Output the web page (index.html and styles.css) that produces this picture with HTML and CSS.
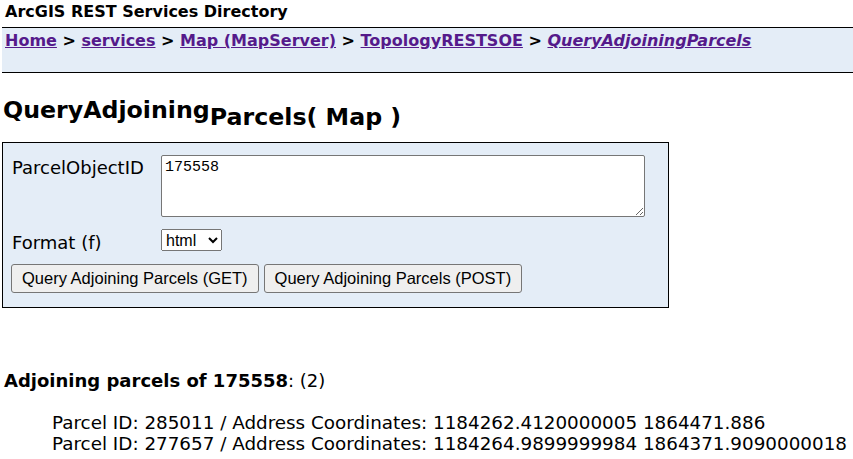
FILE: index.html
```html
<!DOCTYPE html>
<html>
<head>
<meta charset="utf-8">
<title>QueryAdjoiningParcels (Map)</title>
<link rel="stylesheet" href="styles.css">
</head>
<body>
<div class="site-title">ArcGIS REST Services Directory</div>
<nav class="crumbs">
  <a href="#">Home</a> &gt; <a href="#">services</a> &gt; <a href="#">Map (MapServer)</a> &gt; <a href="#">TopologyRESTSOE</a> &gt; <a href="#"><i>QueryAdjoiningParcels</i></a>
</nav>
<h2 class="op-title"><span class="op-raised">QueryAdjoining</span>Parcels( Map )</h2>
<form class="op-form">
  <div class="op-grid">
    <label class="op-label" for="pid">ParcelObjectID</label>
    <textarea id="pid" class="op-text">175558</textarea>
    <label class="op-label op-label-f" for="fmt">Format (f)</label>
    <select id="fmt" class="op-select"><option>html</option></select>
  </div>
  <div class="op-buttons">
    <button type="button" class="op-btn">Query Adjoining Parcels (GET)</button>
    <button type="button" class="op-btn">Query Adjoining Parcels (POST)</button>
  </div>
</form>
<div class="result-head"><b>Adjoining parcels of 175558</b>: (2)</div>
<div class="result-list">
  <div>Parcel ID: 285011 / Address Coordinates: 1184262.4120000005 1864471.886</div>
  <div>Parcel ID: 277657 / Address Coordinates: 1184264.9899999984 1864371.9090000018</div>
</div>
</body>
</html>
```

FILE: styles.css
```css
html, body {
  margin: 0;
  padding: 0;
  background: #fff;
  color: #000;
  font-family: "DejaVu Sans", Verdana, sans-serif;
}
.site-title {
  font-weight: bold;
  font-size: 16px;
  line-height: 20px;
  padding: 2px 0 0 5px;
  height: 27px;
  box-sizing: border-box;
}
.crumbs {
  margin: 0 0 0 2px;
  background: #e4edf7;
  border-top: 1px solid #000;
  border-bottom: 1px solid #000;
  height: 42px;
  padding: 2px 0 0 3px;
  font-weight: bold;
  font-size: 16px;
  line-height: 22px;
}
.crumbs a {
  color: #551a8b;
  text-decoration: underline;
}
.op-title {
  margin: 0;
  padding: 29px 0 0 3px;
  font-size: 23.7px;
  line-height: 30px;
  font-weight: bold;
  height: 69px;
  box-sizing: border-box;
}
.op-raised {
  position: relative;
  top: -7px;
}
.op-form {
  margin: 0 0 0 2px;
  width: 667px;
  height: 166px;
  border: 1px solid #000;
  background: #e4edf7;
  padding: 12px 0 0 9px;
  box-sizing: border-box;
}
.op-grid {
  display: grid;
  grid-template-columns: 149px auto;
  row-gap: 12px;
  align-items: start;
}
.op-label {
  font-size: 18px;
  line-height: 22px;
  padding-top: 2px;
}
.op-label-f {
  padding-top: 3px;
}
.op-text {
  width: 484px;
  height: 62px;
  box-sizing: border-box;
  margin: 0;
  font-family: "Liberation Mono", monospace;
  font-size: 15px;
  padding: 3px 3px;
  border: 1px solid #767676;
  border-radius: 2px;
  resize: both;
}
.op-select {
  justify-self: start;
  margin: 0;
  width: 61px;
  height: 22px;
  font-family: "Liberation Sans", Arial, sans-serif;
  font-size: 16px;
}
.op-buttons {
  display: flex;
  gap: 5px;
  margin-top: 10px;
  margin-left: -1px;
}
.op-btn {
  margin: 0;
  height: 29px;
  padding: 0 10px;
  font-family: "Liberation Sans", Arial, sans-serif;
  font-size: 16.5px;
  background: #efefef;
  border: 1px solid #767676;
  border-radius: 3px;
  color: #000;
}
.result-head {
  margin: 62px 0 0 4px;
  font-size: 18px;
  line-height: 22px;
}
.result-list {
  margin: 20px 0 0 52px;
  font-size: 18.34px;
  line-height: 21px;
}
```
